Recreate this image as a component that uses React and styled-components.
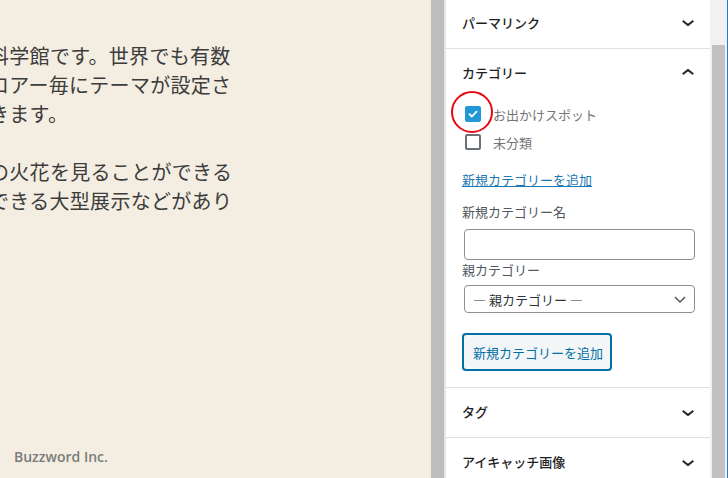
import styled, { createGlobalStyle } from "styled-components";

const GlobalStyle = createGlobalStyle`
  html, body {
    margin: 0;
    padding: 0;
    height: 478px;
    overflow: hidden;
  }
  body {
    font-family: "Noto Sans CJK JP", "Noto Sans", sans-serif;
  }
  * { box-sizing: border-box; }
`;

const Screen = styled.div`
  display: grid;
  grid-template-columns: 431px 13px 2px 264px 18px;
  height: 478px;
  width: 728px;
`;

const Content = styled.main`
  background: #f3eee1;
  overflow: hidden;
  display: flex;
  flex-direction: column;
  justify-content: space-between;
`;

const Article = styled.article`
  padding-top: 41px;
  margin-left: -11px;
  color: #3c3c3c;
  font-size: 20px;
  letter-spacing: 0.3px;
  line-height: 29px;
`;

const Paragraph = styled.p`
  margin: 0 0 29px;
`;

const Line = styled.span`
  display: block;
  white-space: nowrap;
`;

const Footer = styled.footer`
  padding: 0 14px 11px;
  font-family: "Open Sans", "Noto Sans", sans-serif;
  font-weight: 600;
  font-size: 14px;
  line-height: 20px;
  color: #7b7b7b;
`;

const Divider = styled.div`
  background: ${(p) => p.$color};
`;

const Sidebar = styled.aside`
  background: #fff;
  overflow: hidden;
`;

const PanelList = styled.div`
  margin-top: -2px;
`;

const Panel = styled.section`
  border-bottom: 1px solid #e0e0e0;
`;

const PanelHeader = styled.div`
  height: ${(p) => p.$h || 49}px;
  display: flex;
  align-items: center;
  justify-content: space-between;
  padding: 0 10px 2px 16px;
  font-size: 13px;
  font-weight: 500;
  color: #1e1e1e;
`;

const PanelBody = styled.div`
  padding: 2px 16px 16px;
  display: flex;
  flex-direction: column;
  align-items: flex-start;
`;

const CheckRow = styled.label`
  height: 28px;
  display: flex;
  align-items: center;
  gap: 12px;
  padding-left: 3px;
  font-size: 13px;
  color: #757575;
`;

const BoxWrap = styled.span`
  position: relative;
  width: 16px;
  height: 16px;
`;

const Box = styled.span`
  display: flex;
  align-items: center;
  justify-content: center;
  width: 16px;
  height: 16px;
  border-radius: 2px;
  background: ${(p) => (p.$checked ? "#2299d6" : "#fff")};
  border: ${(p) => (p.$checked ? "none" : "2px solid #6c7176")};
`;

const Marker = styled.span`
  position: absolute;
  left: -14px;
  top: -15px;
  width: 42px;
  height: 42px;
  border: 2px solid #e50914;
  border-radius: 50%;
`;

const AddLink = styled.a`
  margin-top: 14px;
  font-size: 13px;
  line-height: 20px;
  color: #1e78b4;
  text-decoration: underline;
`;

const FieldLabel = styled.div`
  margin-top: ${(p) => p.$top || 0}px;
  margin-bottom: ${(p) => p.$bottom || 0}px;
  font-size: 13px;
  line-height: 20px;
  color: #50575e;
`;

const TextInput = styled.div`
  margin-left: 2px;
  width: 231px;
  height: 31px;
  border: 1px solid #8c8f94;
  border-radius: 4px;
`;

const Select = styled.div`
  margin-left: 2px;
  width: 231px;
  height: 28px;
  border: 1px solid #8c8f94;
  border-radius: 4px;
  display: flex;
  align-items: center;
  justify-content: space-between;
  padding: 0 4px 0 8px;
  font-size: 13px;
  color: #2c3338;
`;

const Dash = styled.span`
  font-feature-settings: "fwid";
`;

const Button = styled.button`
  margin-top: 20px;
  width: 150px;
  height: 38px;
  border: 2px solid #0071a8;
  border-radius: 4px;
  background: #f3f5f6;
  color: #0071a8;
  font-family: inherit;
  font-size: 13px;
  text-align: left;
  white-space: nowrap;
  padding: 0 0 0 9px;
`;

const Scrollbar = styled.div`
  display: flex;
  background: #f1f1f1;
  border-right: 1px solid #2a7ec0;
  padding: 45px 2px 0;
`;

const Thumb = styled.div`
  flex: 1;
  background: #c1c1c1;
`;

const Chevron = ({ up }) => (
  <svg width="24" height="24" viewBox="0 0 24 24" style={up ? { transform: "rotate(180deg)" } : undefined}>
    <path d="M17.5 11.6L12 16l-5.5-4.4.9-1.2L12 14l4.6-3.6 1 1.2z" fill="#1e1e1e" stroke="#1e1e1e" strokeWidth="0.6" />
  </svg>
);

const Check = () => (
  <svg width="12" height="12" viewBox="0 0 12 12">
    <path d="M2.5 6.2l2.4 2.3 4.6-4.8" fill="none" stroke="#fff" strokeWidth="1.8" strokeLinecap="round" strokeLinejoin="round" />
  </svg>
);

const SmallChevron = () => (
  <svg width="20" height="20" viewBox="0 0 20 20">
    <path d="M5 8l5 5 5-5" fill="none" stroke="#50575e" strokeWidth="1.5" />
  </svg>
);

const App = () => {
  return (
    <>
      <GlobalStyle />
      <Screen>
        <Content>
          <Article>
            <Paragraph>
              <Line>科学館です。世界でも有数</Line>
              <Line>ロアー毎にテーマが設定さ</Line>
              <Line>きます。</Line>
            </Paragraph>
            <Paragraph>
              <Line>の火花を見ることができる</Line>
              <Line>できる大型展示などがあり</Line>
            </Paragraph>
          </Article>
          <Footer>Buzzword Inc.</Footer>
        </Content>
        <Divider $color="#bdbdbd" />
        <Divider $color="#e6e6e6" />
        <Sidebar>
          <PanelList>
            <Panel>
              <PanelHeader $h={50}>
                パーマリンク
                <Chevron />
              </PanelHeader>
            </Panel>
            <Panel>
              <PanelHeader>
                カテゴリー
                <Chevron up />
              </PanelHeader>
              <PanelBody>
                <CheckRow>
                  <BoxWrap>
                    <Box $checked>
                      <Check />
                    </Box>
                    <Marker />
                  </BoxWrap>
                  お出かけスポット
                </CheckRow>
                <CheckRow>
                  <BoxWrap>
                    <Box />
                  </BoxWrap>
                  未分類
                </CheckRow>
                <AddLink>新規カテゴリーを追加</AddLink>
                <FieldLabel $top={12} $bottom={7}>新規カテゴリー名</FieldLabel>
                <TextInput />
                <FieldLabel $bottom={5}>親カテゴリー</FieldLabel>
                <Select>
                  <span>
                    <Dash>—</Dash> 親カテゴリー <Dash>—</Dash>
                  </span>
                  <SmallChevron />
                </Select>
                <Button>新規カテゴリーを追加</Button>
              </PanelBody>
            </Panel>
            <Panel>
              <PanelHeader>
                タグ
                <Chevron />
              </PanelHeader>
            </Panel>
            <Panel>
              <PanelHeader>
                アイキャッチ画像
                <Chevron />
              </PanelHeader>
            </Panel>
          </PanelList>
        </Sidebar>
        <Scrollbar>
          <Thumb />
        </Scrollbar>
      </Screen>
    </>
  );
};

export default App;
